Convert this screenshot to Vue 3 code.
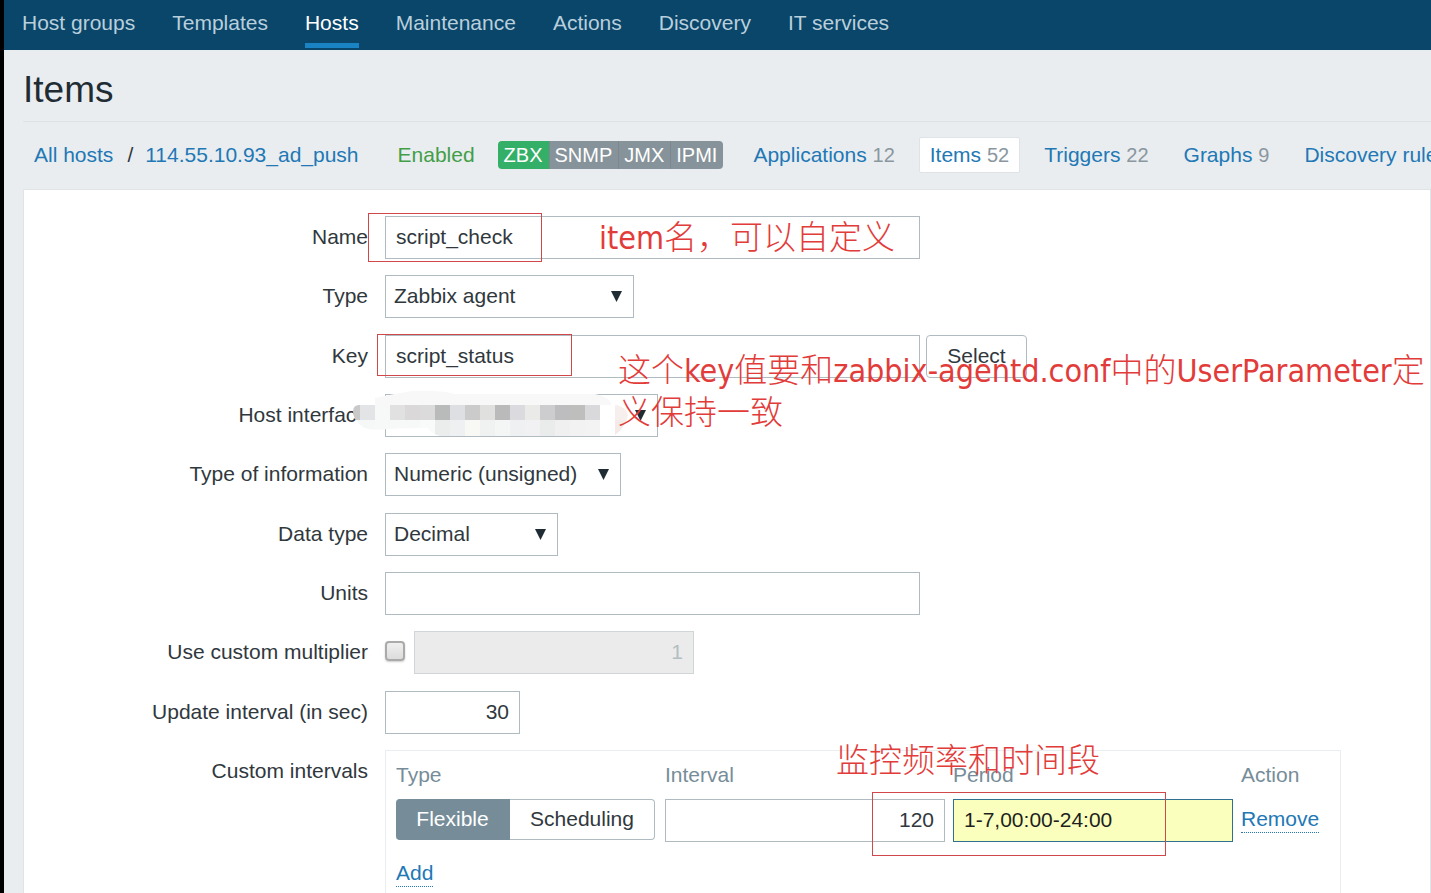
<script setup>
import { ref } from 'vue'

const nav = ['Host groups', 'Templates', 'Hosts', 'Maintenance', 'Actions', 'Discovery', 'IT services']
const tabs = [
  { label: 'Applications', count: 12 },
  { label: 'Items', count: 52, active: true },
  { label: 'Triggers', count: 22 },
  { label: 'Graphs', count: 9 },
  { label: 'Discovery rules', count: 3 },
]
const name = ref('script_check')
const itemKey = ref('script_status')
const units = ref('')
const multiplier = ref('1')
const update = ref('30')
const interval = ref('120')
const period = ref('1-7,00:00-24:00')

// Pixelated cover over the interface address: 15px cells in two rows
const upper = ['#c9c9c9', '#e3e4e6', '#f7f9f8', '#e0e1e0', '#dad8d9', '#dbdbdc', '#b9baba', '#dedfe2', '#cbcbcb', '#e0e1de', '#bababa', '#dbdbdf', '#eaeae9', '#cdcdcf', '#bdbcbe', '#bebebd', '#d9d9db', '#ffffff', '#f6efed']
const lower = ['#f6f7f7', '#f6f7f7', '#f7f8f8', '#f7f8f8', '#f7f8f8', '#f9fafa', '#ebecec', '#eef0f1', '#f8f8f5', '#f0f1f1', '#f4f6f5', '#eef0f1', '#f1f1f3', '#eaecec', '#f0f0f0', '#f2f2f2', '#f3f3f3', '#ffffff', '#f4eae7']
</script>

<template>
  <div class="page">
    <nav class="nav">
      <a v-for="n in nav" :key="n" href="#" :class="{ on: n === 'Hosts' }">{{ n }}</a>
    </nav>
    <main class="main">
      <h1>Items</h1>
      <div class="crumbs">
        <a href="#">All hosts</a>
        <span class="slash">/</span>
        <a href="#">114.55.10.93_ad_push</a>
        <span class="enabled">Enabled</span>
        <div class="tags">
          <span class="green">ZBX</span><span>SNMP</span><span>JMX</span><span>IPMI</span>
        </div>
        <div class="tabs">
          <div v-for="t in tabs" :key="t.label" class="tab" :class="{ active: t.active }">
            <a href="#">{{ t.label }}</a> <span class="count">{{ t.count }}</span>
          </div>
        </div>
      </div>

      <form class="form" @submit.prevent>
        <div class="row">
          <label for="name">Name</label>
          <input id="name" v-model="name" class="wide" type="text">
          <div class="mark mark-name"></div>
          <p class="note note-name"><span>item</span>名，可以自定义</p>
        </div>
        <div class="row">
          <label for="type">Type</label>
          <div class="pick pick-type">
            <select id="type"><option>Zabbix agent</option></select>
            <svg viewBox="0 0 12 12"><path d="M0 0h11L5.500 11z" /></svg>
          </div>
        </div>
        <div class="row">
          <label for="key">Key</label>
          <input id="key" v-model="itemKey" class="wide" type="text">
          <button class="select-btn" type="button">Select</button>
          <div class="mark mark-key"></div>
          <p class="note note-key">这个<span>key</span>值要和<span>zabbix-agentd.conf</span>中的<span>UserParameter</span>定<br>义保持一致</p>
        </div>
        <div class="row">
          <label for="iface">Host interface</label>
          <div class="pick pick-iface">
            <select id="iface"><option></option></select>
            <svg viewBox="0 0 12 12"><path d="M0 0h11L5.500 11z" /></svg>
          </div>
          <svg class="mosaic" viewBox="345 390 285 48" aria-hidden="true">
            <defs>
              <clipPath id="blob">
                <path d="M353 412Q353 405 359 405H375V398Q392 394 412 391Q440 390 455 394H595Q610 397 612 405H617Q628 409 628 415Q626 427 614 436H440Q430 433 428 428Q405 428 388 429Q375 431 364 428Q353 420 353 412Z" />
              </clipPath>
            </defs>
            <g clip-path="url(#blob)" shape-rendering="crispEdges">
              <rect x="345" y="390" width="285" height="15" fill="#f8f8f8" />
              <rect v-for="(c, i) in upper" :key="'u' + i" :x="345 + i * 15" y="405" width="15" height="15" :fill="c" />
              <rect v-for="(c, i) in lower" :key="'l' + i" :x="345 + i * 15" y="420" width="15" height="16" :fill="c" />
            </g>
          </svg>
        </div>
        <div class="row">
          <label for="info">Type of information</label>
          <div class="pick pick-info">
            <select id="info"><option>Numeric (unsigned)</option></select>
            <svg viewBox="0 0 12 12"><path d="M0 0h11L5.500 11z" /></svg>
          </div>
        </div>
        <div class="row">
          <label for="data">Data type</label>
          <div class="pick pick-data">
            <select id="data"><option>Decimal</option></select>
            <svg viewBox="0 0 12 12"><path d="M0 0h11L5.500 11z" /></svg>
          </div>
        </div>
        <div class="row">
          <label for="units">Units</label>
          <input id="units" v-model="units" class="wide" type="text">
        </div>
        <div class="row">
          <label for="multi">Use custom multiplier</label>
          <input id="multi" class="check" type="checkbox">
          <input v-model="multiplier" class="mid num" type="text" aria-label="Multiplier" disabled>
        </div>
        <div class="row">
          <label for="update">Update interval (in sec)</label>
          <input id="update" v-model="update" class="short num" type="text">
        </div>
        <div class="row">
          <span class="label">Custom intervals</span>
          <div class="box">
            <table>
              <thead>
                <tr><th>Type</th><th>Interval</th><th>Period</th><th>Action</th></tr>
              </thead>
              <tbody>
                <tr>
                  <td>
                    <div class="toggle">
                      <button class="sel" type="button">Flexible</button><button type="button">Scheduling</button>
                    </div>
                  </td>
                  <td><input v-model="interval" class="mid num" type="text" aria-label="Interval"></td>
                  <td><input v-model="period" class="mid focus" type="text" aria-label="Period"></td>
                  <td><a class="dotted" href="#">Remove</a></td>
                </tr>
              </tbody>
            </table>
            <a class="dotted add" href="#">Add</a>
          </div>
          <div class="mark mark-period"></div>
          <p class="note note-period">监控频率和时间段</p>
        </div>
      </form>
    </main>
  </div>
</template>

<style>
body {
  margin: 0;
  background: #e9edf0;
}
</style>

<style scoped>
* {
  box-sizing: border-box;
}
.page {
  height: 100vh;
  overflow: hidden;
  border-left: 4px solid #000;
  background: #e9edf0;
  color: #30383d;
  font-family: "Liberation Sans", Arial, sans-serif;
  font-size: 21px;
  line-height: 26px;
}
a {
  color: #2278b5;
  text-decoration: none;
}
.nav {
  display: flex;
  gap: 37px;
  height: 50px;
  padding: 10px 18px 0;
  background: #0a466a;
}
.nav a {
  height: 38px;
  color: #b9cfdc;
  white-space: nowrap;
}
.nav .on {
  color: #fff;
  border-bottom: 5px solid #1a83c4;
}
.main {
  padding-left: 19px;
}
h1 {
  margin: 0;
  padding: 18px 0 9px;
  border-bottom: 1px solid #dde2e5;
  color: #1f2c33;
  font-size: 37px;
  font-weight: 400;
  line-height: 44px;
}
.crumbs {
  display: flex;
  align-items: center;
  height: 67px;
  padding: 0 0 2px 11px;
  overflow: hidden;
  white-space: nowrap;
}
.crumbs > * {
  flex: none;
}
.slash {
  margin: 0 12px 0 14px;
}
.enabled {
  margin: 0 23px 0 39px;
  color: #429e47;
}
.tags {
  display: flex;
  margin-right: 19px;
  overflow: hidden;
  border-radius: 4px;
  color: #fff;
  font-size: 20px;
  line-height: 27px;
}
.tags span {
  padding: 1px 6px 0;
  background: #87939a;
}
.tags span + span {
  box-shadow: inset 1px 0 #7c888e;
}
.tags .green {
  background: #34af67;
}
.tabs {
  display: flex;
  gap: 13px;
}
.tab {
  padding: 4px 10px;
  border: 1px solid transparent;
}
.tab.active {
  border-color: #dde3e6;
  border-radius: 2px;
  background: #fff;
}
.count {
  color: #8a979f;
  font-size: 20px;
}
.form {
  min-height: 100vh;
  padding-top: 26px;
  border: 1px solid #dfe4e7;
  background: #fff;
}
.row {
  position: relative;
  display: flex;
  align-items: flex-start;
  min-height: 43px;
  margin-bottom: 16px;
}
.row:nth-child(3n + 2) {
  margin-bottom: 17px;
}
.row > label,
.label {
  flex: none;
  width: 344px;
  margin-right: 17px;
  line-height: 42px;
  text-align: right;
}
input,
select,
button {
  margin: 0;
  border: 1px solid #afbbc0;
  border-radius: 0;
  background: #fff;
  color: #30383d;
  font: inherit;
}
input,
select {
  display: block;
  height: 43px;
  padding: 0 10px 2px;
  outline: none;
}
select {
  width: 100%;
  padding: 0 8px 2px;
  appearance: none;
}
.wide {
  width: 535px;
}
.mid {
  width: 280px;
}
.short {
  width: 135px;
}
.num {
  text-align: right;
}
input:disabled {
  border-color: #d0d5d7;
  background: #ebebeb;
  color: #b3bec3;
}
.focus {
  border-color: #2f718f;
  background: #faffbd;
  color: #1f1f1f;
}
.check {
  width: 20px;
  height: 20px;
  margin: 10px 9px 0 0;
  padding: 0;
  border: 2px solid #aaa;
  border-radius: 4px;
  background: linear-gradient(#efefef, #dcdcdc);
  box-shadow: 0 1px 2px #ccc;
  appearance: none;
}
.pick {
  position: relative;
}
.pick svg {
  position: absolute;
  top: 16px;
  right: 11px;
  width: 12px;
  height: 12px;
  fill: #1f2c33;
  pointer-events: none;
}
.pick-type {
  width: 249px;
}
.pick-iface {
  width: 273px;
}
.pick-info {
  width: 236px;
}
.pick-data {
  width: 173px;
}
.select-btn {
  width: 101px;
  height: 43px;
  margin-left: 6px;
  padding: 0 0 2px;
  border-radius: 4px;
}
.box {
  width: 956px;
  min-height: 300px;
  padding: 11px 10px;
  border: 1px solid #ebeef0;
}
table {
  border-collapse: collapse;
}
th {
  padding: 0 0 11px;
  color: #768d99;
  font-weight: 400;
  text-align: left;
}
td {
  padding: 0 8px 0 0;
  vertical-align: top;
}
.toggle {
  display: flex;
  margin-right: 2px;
}
.toggle button {
  width: 145px;
  height: 41px;
  padding: 0 0 2px;
  border-left: 0;
  border-radius: 0 4px 4px 0;
}
.toggle .sel {
  width: 114px;
  border-color: #768d99;
  border-radius: 4px 0 0 4px;
  background: #768d99;
  color: #fff;
}
.dotted {
  display: inline-block;
  border-bottom: 1px dotted #2278b5;
}
td .dotted {
  margin-top: 7px;
}
.add {
  margin-top: 18px;
}
.mark,
.note,
.mosaic {
  position: absolute;
  pointer-events: none;
}
.mark {
  z-index: 2;
  border: 1px solid #d2484a;
}
.mark-name {
  top: -3px;
  left: 344px;
  width: 174px;
  height: 49px;
}
.mark-key {
  top: -1px;
  left: 353px;
  width: 195px;
  height: 42px;
}
.mark-period {
  top: 42px;
  left: 848px;
  width: 294px;
  height: 64px;
}
.note {
  z-index: 2;
  margin: 0;
  color: #e23c3a;
  font-family: "Noto Sans CJK SC", sans-serif;
  font-size: 33px;
  font-weight: 300;
  line-height: 42px;
  white-space: nowrap;
}
.note span {
  font-family: "DejaVu Sans Condensed", "DejaVu Sans", sans-serif;
  font-size: 32px;
  font-weight: 400;
  line-height: 1;
}
.note-name {
  top: -2px;
  left: 575px;
}
.note-key {
  top: 12px;
  left: 594px;
}
.note-period {
  top: -13px;
  left: 812px;
}
.mosaic {
  z-index: 1;
  top: -4px;
  left: 321px;
  width: 285px;
  height: 48px;
}
</style>
